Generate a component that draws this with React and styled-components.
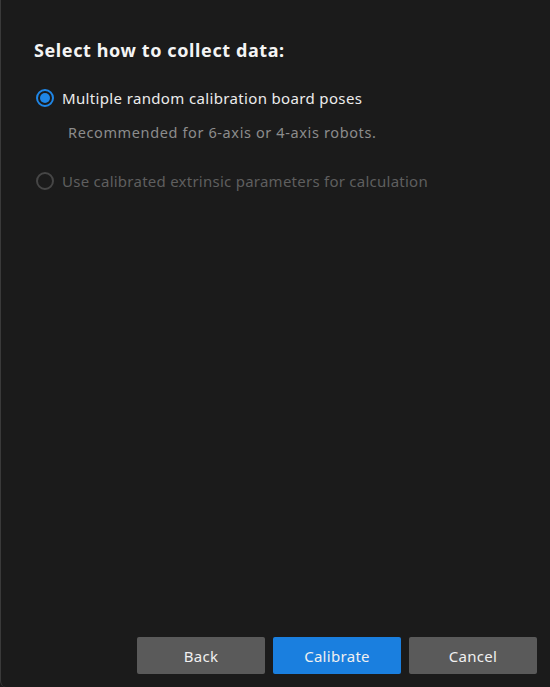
import React, { useState } from 'react';
import styled, { createGlobalStyle } from 'styled-components';

const GlobalStyle = createGlobalStyle`
  html, body {
    margin: 0;
    padding: 0;
    background: #1b1b1b;
  }
`;

const Dialog = styled.div`
  box-sizing: border-box;
  width: 550px;
  height: 687px;
  display: flex;
  flex-direction: column;
  background-color: #1b1b1b;
  border-left: 1px solid #3a3a3a;
  border-bottom-left-radius: 6px;
  font-family: 'Noto Sans', 'Open Sans', sans-serif;
  color: #e8e8e8;
`;

const Body = styled.div`
  flex: 1;
  padding: 35px 0 0 33px;
`;

const Title = styled.h2`
  margin: 0 0 21px;
  font-size: 18px;
  font-weight: 700;
  letter-spacing: 0.6px;
  line-height: 30px;
  color: #f4f4f4;
`;

const Option = styled.label`
  display: flex;
  align-items: center;
  gap: 8px;
  height: 24px;
  margin-left: 2px;
  font-size: 15px;
  letter-spacing: ${p => (p.disabled ? '0.25px' : '0.35px')};
  color: ${p => (p.disabled ? '#5f5f5f' : '#ececec')};
  cursor: ${p => (p.disabled ? 'default' : 'pointer')};
`;

const Radio = styled.span`
  box-sizing: border-box;
  width: 18px;
  height: 18px;
  border-radius: 50%;
  border: 2px solid ${p => (p.checked ? '#1f86e6' : '#464646')};
  display: flex;
  align-items: center;
  justify-content: center;

  &::after {
    content: '';
    width: 10px;
    height: 10px;
    border-radius: 50%;
    background: ${p => (p.checked ? '#1f86e6' : 'transparent')};
  }
`;

const Hint = styled.div`
  margin: 12px 0 27px 34px;
  font-size: 14.5px;
  letter-spacing: 0.62px;
  line-height: 20px;
  color: #8c8c8c;
`;

const Footer = styled.div`
  display: flex;
  justify-content: flex-end;
  gap: 8px;
  padding: 0 13px 13px 0;
`;

const Button = styled.button`
  width: 128px;
  height: 37px;
  border: none;
  border-radius: 2px;
  font-family: inherit;
  font-size: 15px;
  letter-spacing: 0.3px;
  color: #f0f0f0;
  background: ${p => (p.primary ? '#1a7fdf' : '#5a5a5a')};
  cursor: pointer;
`;

export default function App() {
  const [mode, setMode] = useState('random');
  return (
    <>
      <GlobalStyle />
      <Dialog>
        <Body>
          <Title>Select how to collect data:</Title>
          <Option onClick={() => setMode('random')}>
            <Radio checked={mode === 'random'} />
            Multiple random calibration board poses
          </Option>
          <Hint>Recommended for 6-axis or 4-axis robots.</Hint>
          <Option disabled>
            <Radio />
            Use calibrated extrinsic parameters for calculation
          </Option>
        </Body>
        <Footer>
          <Button>Back</Button>
          <Button primary>Calibrate</Button>
          <Button>Cancel</Button>
        </Footer>
      </Dialog>
    </>
  );
}
